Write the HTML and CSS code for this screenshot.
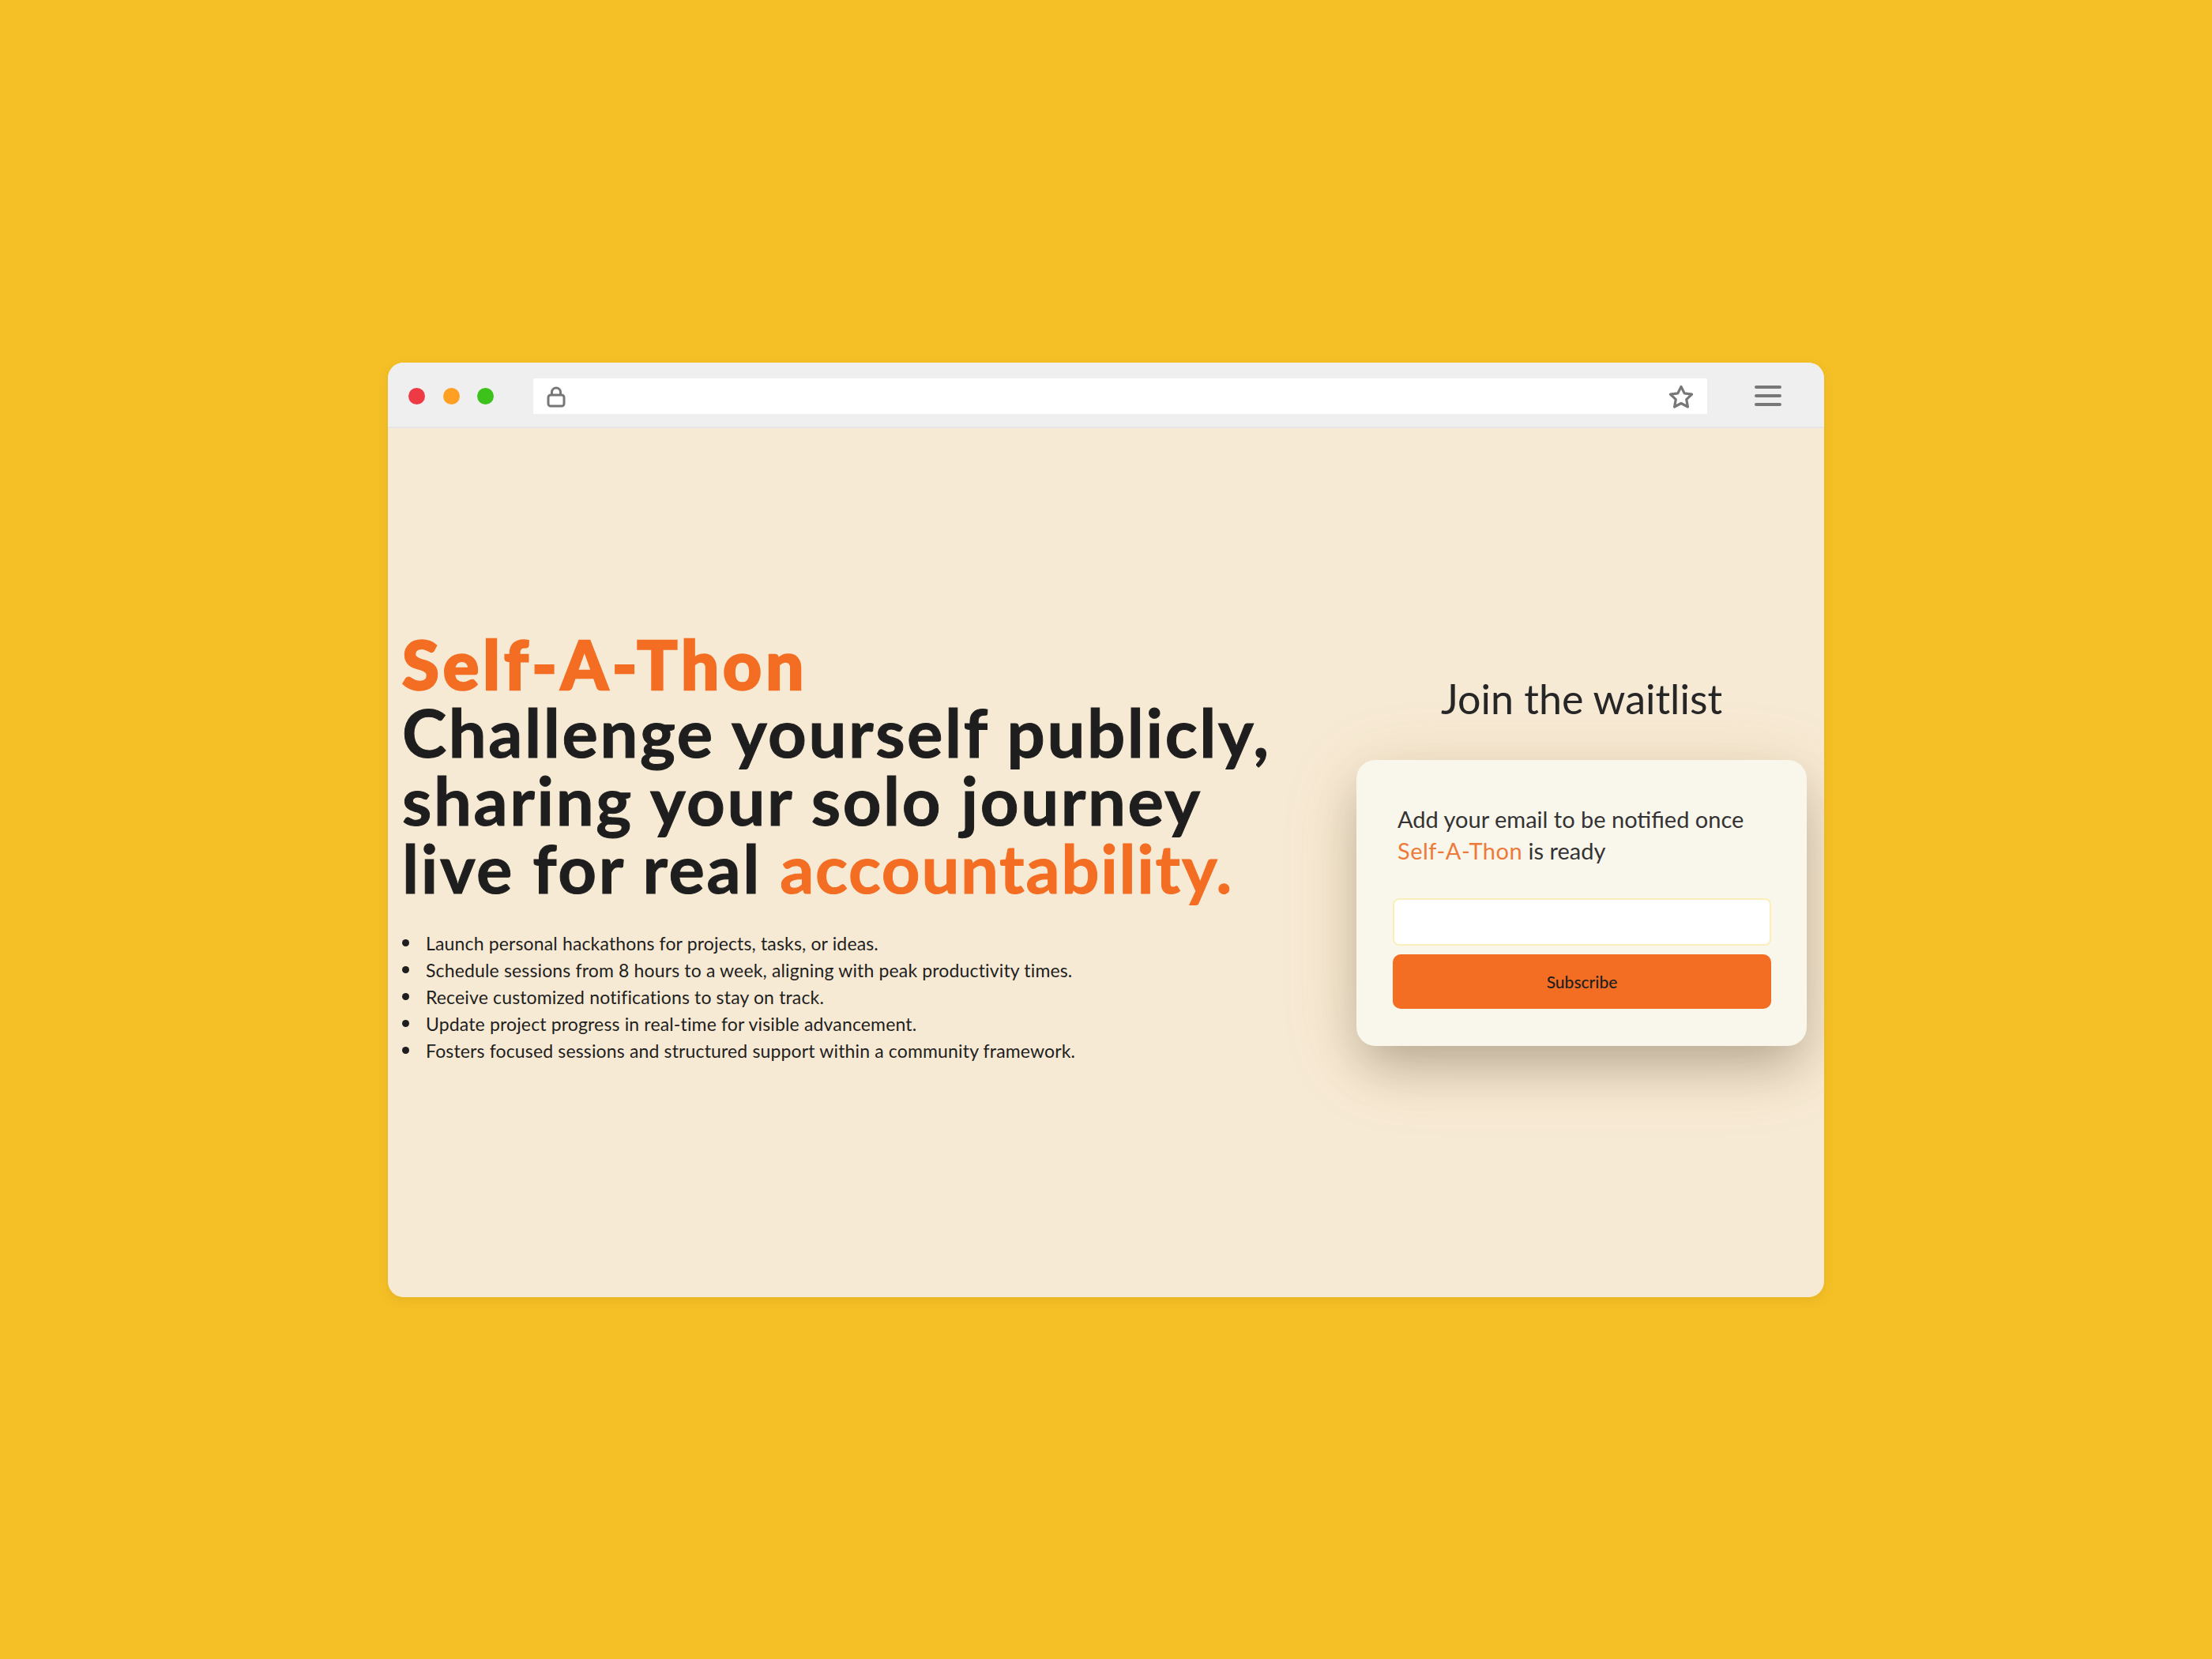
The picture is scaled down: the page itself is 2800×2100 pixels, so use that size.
FILE: index.html
```html
<!DOCTYPE html>
<html lang="en">
<head>
    <meta charset="UTF-8">
    <title>Self-A-Thon</title>
    <link rel="stylesheet" href="styles.css">
</head>
<body>
    <div class="window">
        <div class="toolbar">
            <div class="dots">
                <span class="dot red"></span>
                <span class="dot orange"></span>
                <span class="dot green"></span>
            </div>
            <div class="address">
                <svg class="lock" width="24" height="27" viewBox="0 0 24 27" fill="none" stroke="#777" stroke-width="3" stroke-linejoin="round">
                    <rect x="2" y="11" width="20" height="14" rx="3"/>
                    <path d="M6.5 11V7.5a5.5 5.5 0 0 1 11 0V11"/>
                </svg>
                <svg class="star" width="32" height="31" viewBox="0 0 30 29" fill="none" stroke="#777" stroke-width="3" stroke-linejoin="round">
                    <path d="M15 2.2l3.900 8 8.800 1.200-6.400 6.100 1.600 8.700-7.900-4.200-7.900 4.200 1.600-8.700-6.400-6.100 8.800-1.200z"/>
                </svg>
            </div>
            <div class="menu">
                <span></span>
                <span></span>
                <span></span>
            </div>
        </div>
        <div class="content">
            <div class="hero">
                <h1><span class="accent brand">Self-A-Thon</span><br>Challenge yourself publicly,<br>sharing your solo journey<br>live for real <span class="accent goal">accountability.</span></h1>
                <ul>
                    <li>Launch personal hackathons for projects, tasks, or ideas.</li>
                    <li>Schedule sessions from 8 hours to a week, aligning with peak productivity times.</li>
                    <li>Receive customized notifications to stay on track.</li>
                    <li>Update project progress in real-time for visible advancement.</li>
                    <li>Fosters focused sessions and structured support within a community framework.</li>
                </ul>
            </div>
            <div class="waitlist">
                <h2>Join the waitlist</h2>
                <form class="card">
                    <p>Add your email to be notified once <span class="accent">Self-A-Thon</span> is ready</p>
                    <input type="email">
                    <button type="button">Subscribe</button>
                </form>
            </div>
        </div>
    </div>
</body>
</html>
```

FILE: styles.css
```css
* {
    box-sizing: border-box;
    margin: 0;
    padding: 0;
    font-family: "Lato", "Open Sans", sans-serif;
}

body {
    height: 100vh;
    display: flex;
    align-items: center;
    justify-content: center;
    background-color: #f5c026;
    color: #1e1e1e;
}

.window {
    width: 1818px;
    height: 1183px;
    display: flex;
    flex-direction: column;
    border-radius: 20px;
    overflow: hidden;
    background: #f7ead4;
    box-shadow: 0 4px 14px rgba(120,80,0,0.12);
}

.toolbar {
    height: 83px;
    flex-shrink: 0;
    display: flex;
    align-items: center;
    padding: 4px 54px 0 26px;
    background: #efefef;
    border-bottom: 2px solid #e6e6e6;
}

.dots {
    display: flex;
    gap: 22.5px;
    margin-right: 50px;
}

.dot {
    width: 21px;
    height: 21px;
    border-radius: 50%;
}

.red { background: #ee3a45; }
.orange { background: #ff9f24; }
.green { background: #3cc21a; }

.address {
    flex: 1;
    height: 45px;
    display: flex;
    align-items: center;
    justify-content: space-between;
    padding: 2px 17px 0 17px;
    background: white;
    border-radius: 2px;
}

.menu {
    width: 34px;
    margin-left: 60px;
    display: flex;
    flex-direction: column;
    gap: 7px;
}

.menu span {
    height: 4px;
    border-radius: 2px;
    background: #777;
}

.content {
    flex: 1;
    display: flex;
    align-items: center;
    justify-content: space-between;
    padding: 0 22px 0 18px;
}

.accent {
    color: #f36d23;
}

.hero {
    padding-bottom: 40px;
}

h1 {
    font-size: 85px;
    font-weight: 700;
    line-height: 86px;
    letter-spacing: 2.6px;
    margin-bottom: 36px;
    -webkit-text-stroke: 1px currentColor;
}

.brand {
    font-weight: 900;
    letter-spacing: 5px;
    -webkit-text-stroke: 2.5px currentColor;
}

.goal {
    letter-spacing: 1.7px;
}

ul {
    list-style: none;
    font-size: 23px;
    line-height: 34px;
    letter-spacing: 0.15px;
}

li {
    display: flex;
    align-items: center;
    gap: 21px;
}

li::before {
    content: "";
    width: 9px;
    height: 9px;
    border-radius: 50%;
    background: #1e1e1e;
}

.waitlist {
    width: 570px;
    padding-bottom: 8px;
}

h2 {
    font-size: 52px;
    font-weight: 400;
    color: #262626;
    text-align: center;
    line-height: 66px;
    margin-bottom: 45px;
}

.card {
    height: 362px;
    padding: 55px 45px 0 46px;
    background: #f9f6ec;
    border-radius: 24px;
    box-shadow: 0 30px 60px -8px rgba(0,0,0,0.22), 0 20px 100px rgba(150,90,20,0.16);
}

.card p {
    padding: 0 6px;
    font-size: 29px;
    line-height: 40px;
    color: #333;
    margin-bottom: 40px;
}

.card .accent {
    color: #ee7a3a;
    letter-spacing: 0.5px;
}

input {
    display: block;
    width: 100%;
    height: 60px;
    margin-bottom: 11px;
    background: white;
    border: 2px solid #fbeebb;
    border-radius: 8px;
}

button {
    display: block;
    width: 100%;
    height: 69px;
    background: #f36d23;
    color: #1e1e1e;
    font-size: 21px;
    font-weight: 500;
    border: none;
    border-radius: 10px;
    cursor: pointer;
}
```
